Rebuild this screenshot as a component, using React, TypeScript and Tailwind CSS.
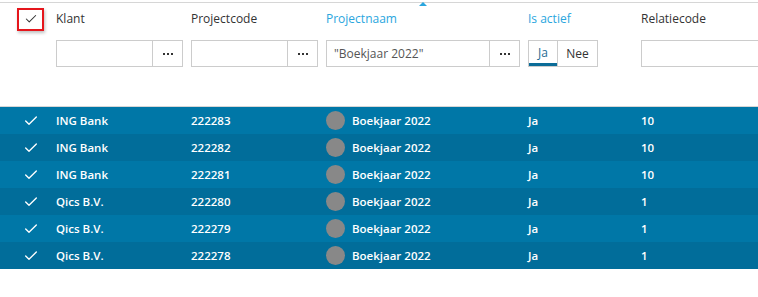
import { Check } from "lucide-react";

const rows = [
  { klant: "ING Bank", code: "222283", naam: "Boekjaar 2022", actief: "Ja", rel: "10" },
  { klant: "ING Bank", code: "222282", naam: "Boekjaar 2022", actief: "Ja", rel: "10" },
  { klant: "ING Bank", code: "222281", naam: "Boekjaar 2022", actief: "Ja", rel: "10" },
  { klant: "Qics B.V.", code: "222280", naam: "Boekjaar 2022", actief: "Ja", rel: "1" },
  { klant: "Qics B.V.", code: "222279", naam: "Boekjaar 2022", actief: "Ja", rel: "1" },
  { klant: "Qics B.V.", code: "222278", naam: "Boekjaar 2022", actief: "Ja", rel: "1" },
];

const cols = "grid grid-cols-[56px_135px_135px_202px_113px_1fr]";

function FilterInput({ value, width }: { value?: string; width: string }) {
  return (
    <div className={`flex h-[27px] ${width} border border-[#cccccc] bg-white`}>
      <div className="flex flex-1 items-center px-[7px] text-[12px] text-[#555]">{value}</div>
      <div className="flex w-[30px] items-center justify-center gap-[2px] border-l border-[#cccccc]">
        <span className="h-[2px] w-[2px] bg-[#333]" />
        <span className="h-[2px] w-[2px] bg-[#333]" />
        <span className="h-[2px] w-[2px] bg-[#333]" />
      </div>
    </div>
  );
}

export default function App() {
  return (
    <div className="h-[297px] w-[758px] overflow-hidden bg-white font-['Open_Sans',sans-serif]">
      <div className="mt-[2px] border-t border-[#d6d6d6]">
        <div className={`${cols} h-[32px] items-center text-[12px] text-[#333]`}>
          <div className="flex justify-end pr-[12px]">
            <div className="flex h-[23px] w-[27px] items-center justify-center border-2 border-[#e5161c] shadow-[1px_2px_3px_rgba(0,0,0,0.25)]">
              <Check size={14} strokeWidth={1.8} className="text-[#333]" />
            </div>
          </div>
          <div>Klant</div>
          <div>Projectcode</div>
          <div className="relative text-[#2aa6de]">
            Projectnaam
            <span className="absolute left-[93px] top-[-8px] h-0 w-0 border-x-[4px] border-b-[4px] border-x-transparent border-b-[#2aa6de]" />
          </div>
          <div className="text-[#2aa6de]">Is actief</div>
          <div>Relatiecode</div>
        </div>
        <div className={`${cols} mt-[5px] h-[67px] items-start border-b border-[#d6d6d6]`}>
          <div />
          <FilterInput width="w-[127px]" />
          <FilterInput width="w-[127px]" />
          <FilterInput width="w-[194px]" value={'"Boekjaar 2022"'} />
          <div className="flex h-[27px] w-[70px] border border-[#cccccc] text-[12px]">
            <div className="flex w-[28px] items-center justify-center border-b-[3px] border-[#0b6c98] pt-[2px] text-[#1e6b93]">Ja</div>
            <div className="flex flex-1 items-center justify-center border-l border-[#cccccc] text-[#333]">Nee</div>
          </div>
          <div className="h-[27px] border border-r-0 border-[#cccccc]" />
        </div>
        <div className="text-[11.5px] font-semibold text-white">
          {rows.map((r, i) => (
            <div
              key={r.code}
              className={`${cols} h-[27px] items-center ${i % 2 === 0 ? "bg-[#0077a7]" : "bg-[#016d9a]"}`}
            >
              <div className="flex justify-end pr-[17px]">
                <Check size={16} strokeWidth={2} />
              </div>
              <div>{r.klant}</div>
              <div>{r.code}</div>
              <div className="flex items-center gap-[7px]">
                <span className="h-[19px] w-[19px] rounded-full bg-[#888888]" />
                {r.naam}
              </div>
              <div>{r.actief}</div>
              <div>{r.rel}</div>
            </div>
          ))}
        </div>
      </div>
    </div>
  );
}
